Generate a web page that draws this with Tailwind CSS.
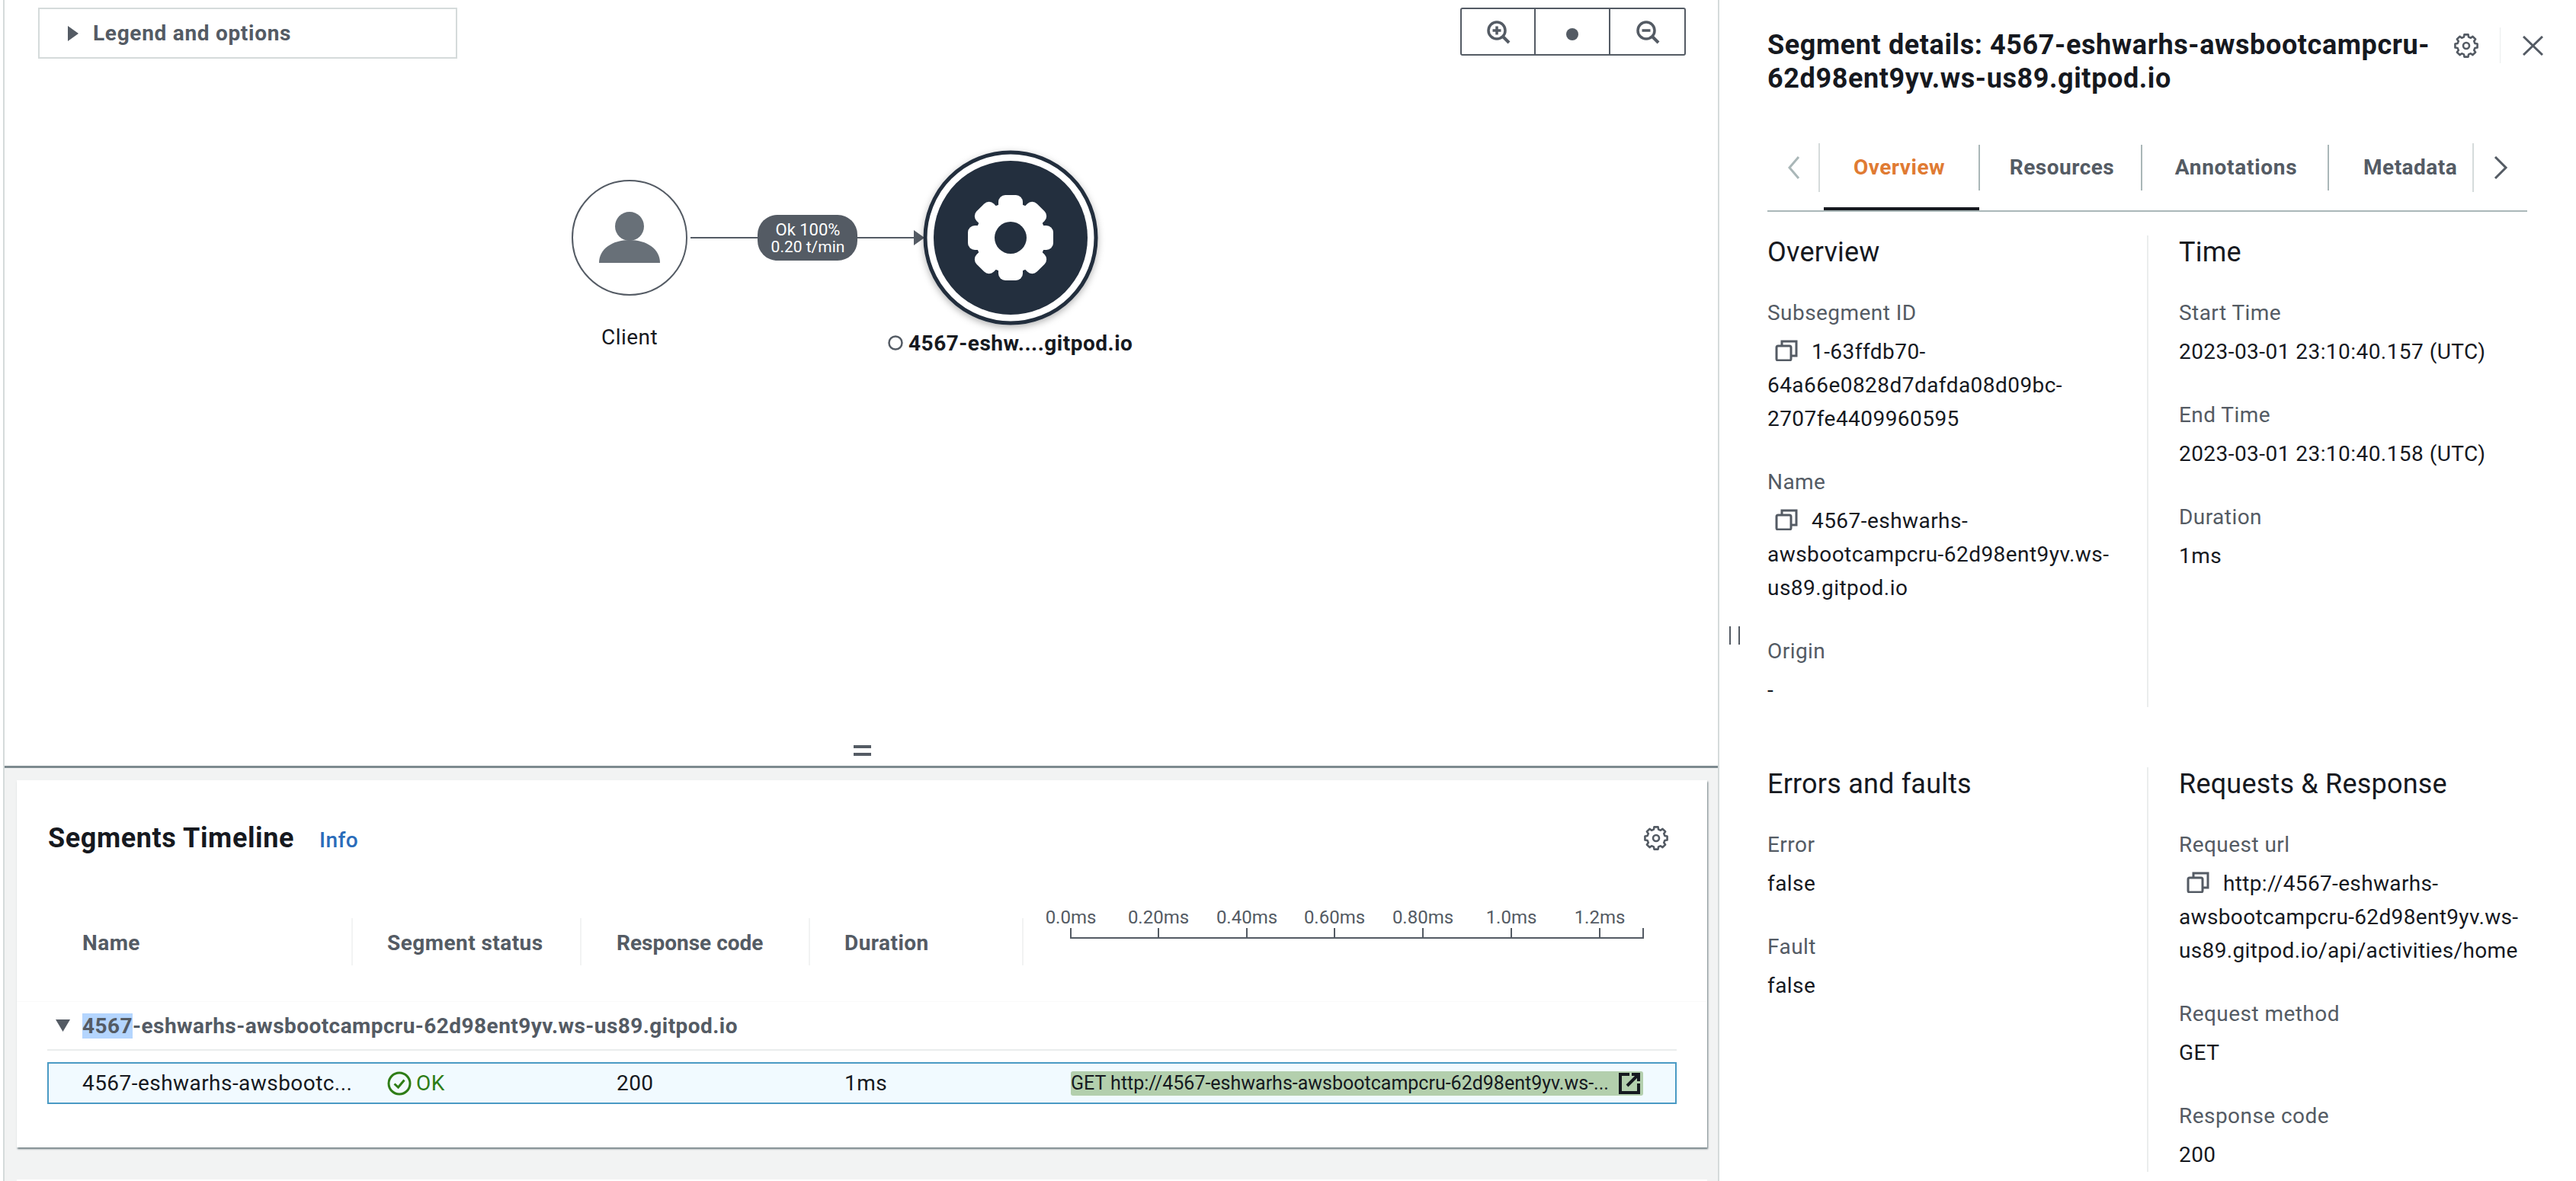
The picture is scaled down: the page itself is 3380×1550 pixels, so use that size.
<!DOCTYPE html>
<html lang="en">
<head>
    <meta charset="UTF-8">
    <title>Segment details</title>
    <script src="https://cdn.jsdelivr.net/npm/@tailwindcss/browser@4"></script>
</head>
<body class="bg-white">
    <div class="flex w-[3380px] h-[1550px] overflow-hidden bg-white font-['Roboto',sans-serif] text-[28px] leading-[44px] tracking-[0.45px] text-[#16191f]">

        <!-- left pane -->
        <div class="ml-[4px] w-[2250px] shrink-0 border-l-2 border-[#d5dbdb] flex flex-col">

            <!-- service map -->
            <div class="relative h-[1008px] shrink-0 border-b-[3px] border-[#7d8a8f]">
                <div class="flex justify-between items-start pt-[10px] pl-[44px] pr-[42px]">
                    <div class="w-[550px] h-[67px] border-2 border-[#d5dbdb] flex items-center pl-[36px] gap-[18px]">
                        <svg width="16" height="22" viewBox="0 0 16 22"><path d="M1 1 L15 11 L1 21 Z" fill="#545b64"/></svg>
                        <span class="font-bold text-[#545b64] tracking-[0.7px]">Legend and options</span>
                    </div>
                    <div class="flex h-[63px] border-2 border-[#545b64] rounded-[3px]">
                        <div class="w-[97px] flex items-center justify-center border-r-2 border-[#545b64]">
                            <svg width="32" height="32" viewBox="0 0 32 32" fill="none" stroke="#545b64"><circle cx="14" cy="14" r="11" stroke-width="3.5"/><path d="M22 22 L30 30" stroke-width="4"/><path d="M8.5 14 H19.5 M14 8.5 V19.5" stroke-width="3.5"/></svg>
                        </div>
                        <div class="w-[98px] flex items-center justify-center border-r-2 border-[#545b64]">
                            <div class="w-[16px] h-[16px] rounded-full bg-[#545b64] mt-[6px]"></div>
                        </div>
                        <div class="w-[97px] flex items-center justify-center">
                            <svg width="32" height="32" viewBox="0 0 32 32" fill="none" stroke="#545b64"><circle cx="14" cy="14" r="11" stroke-width="3.5"/><path d="M22 22 L30 30" stroke-width="4"/><path d="M8.5 14 H19.5" stroke-width="3.5"/></svg>
                        </div>
                    </div>
                </div>

                <!-- graph nodes -->
                <svg class="absolute left-0 top-0" width="2248" height="1000" viewBox="6 0 2248 1000">
                    <defs>
                        <filter id="nodeShadow" x="-20%" y="-20%" width="140%" height="140%"><feDropShadow dx="0" dy="3" stdDeviation="5" flood-color="#000" flood-opacity="0.3"/></filter>
                    </defs>
                    <circle cx="826" cy="312" r="75" fill="#fff" stroke="#545b64" stroke-width="2"/>
                    <ellipse cx="826" cy="297" rx="19" ry="19" fill="#687078"/>
                    <path d="M786 345 C786 327 803 315 826 315 C849 315 866 327 866 345 Z" fill="#687078"/>
                    <path d="M906 312 H1204" stroke="#545b64" stroke-width="2"/>
                    <path d="M1199 302 L1213 312 L1199 322 Z" fill="#545b64"/>
                    <rect x="994" y="282" width="131" height="60" rx="26" fill="#545b64"/>
                    <text x="1060" y="309" text-anchor="middle" font-size="22" fill="#fff" class="tracking-normal">Ok 100%</text>
                    <text x="1060" y="331" text-anchor="middle" font-size="21" fill="#fff" class="tracking-normal">0.20 t/min</text>
                    <circle cx="1326" cy="312" r="112" fill="#fff" stroke="#232f3e" stroke-width="5" filter="url(#nodeShadow)"/>
                    <circle cx="1326" cy="312" r="101" fill="#232f3e"/>
                    <g fill="#fff" transform="translate(1326 312)">
                        <circle r="46"/>
                        <rect x="-16" y="-56" width="32" height="30" rx="9"/>
                        <rect x="-16" y="-56" width="32" height="30" rx="9" transform="rotate(45)"/>
                        <rect x="-16" y="-56" width="32" height="30" rx="9" transform="rotate(90)"/>
                        <rect x="-16" y="-56" width="32" height="30" rx="9" transform="rotate(135)"/>
                        <rect x="-16" y="-56" width="32" height="30" rx="9" transform="rotate(180)"/>
                        <rect x="-16" y="-56" width="32" height="30" rx="9" transform="rotate(225)"/>
                        <rect x="-16" y="-56" width="32" height="30" rx="9" transform="rotate(270)"/>
                        <rect x="-16" y="-56" width="32" height="30" rx="9" transform="rotate(315)"/>
                    </g>
                    <circle cx="1326" cy="312" r="21" fill="#232f3e"/>
                    <text x="826" y="452" text-anchor="middle" font-size="28" fill="#16191f">Client</text>
                    <circle cx="1175" cy="450" r="8.5" fill="#fff" stroke="#545b64" stroke-width="2.5"/>
                    <text x="1192" y="460" font-size="28" font-weight="700" fill="#16191f" class="tracking-[0.5px]">4567-eshw....gitpod.io</text>
                </svg>

                <div class="absolute left-[1114px] top-[978px] w-[23px] h-[14px] border-y-[4px] border-[#545b64]"></div>
            </div>

            <!-- timeline -->
            <div class="flex-1 bg-[#f2f3f3] pl-[16px] pr-[14px] pt-[16px]">
                <div class="h-[482px] pt-[54px] bg-white shadow-[1px_2px_2px_0_rgba(0,28,36,0.55)]">
                    <div class="flex justify-between items-center h-[44px] pl-[41px] pr-[51px]">
                        <div class="flex items-center h-[44px] gap-[33px]">
                            <h2 class="text-[36px] font-bold tracking-[0.6px]">Segments Timeline</h2>
                            <span class="font-medium text-[#2a6cba] pt-[6px] leading-[38px]">Info</span>
                        </div>
                        <svg width="32" height="32" viewBox="0 0 16 16" fill="none" stroke="#545b64" stroke-width="1.3" stroke-linejoin="round"><polygon points="6.715,0.712 9.285,0.712 9.527,2.301 10.95,2.89 12.244,1.938 14.062,3.756 13.11,5.05 13.699,6.473 15.288,6.715 15.288,9.285 13.699,9.527 13.11,10.95 14.062,12.244 12.244,14.062 10.95,13.11 9.527,13.699 9.285,15.288 6.715,15.288 6.473,13.699 5.05,13.11 3.756,14.062 1.938,12.244 2.89,10.95 2.301,9.527 0.712,9.285 0.712,6.715 2.301,6.473 2.89,5.05 1.938,3.756 3.756,1.938 5.05,2.89 6.473,2.301"/><circle cx="8" cy="8" r="2"/></svg>
                    </div>

                    <div class="mt-[68px] px-[40px]">
                        <!-- header row -->
                        <div class="grid grid-cols-[401px_300px_300px_280px_856px] h-[77px] font-bold text-[#545b64]">
                            <div class="self-end h-[62px] pl-[46px] pt-[11px] border-r-2 border-[#f2f3f3]">Name</div>
                            <div class="self-end h-[62px] pl-[45px] pt-[11px] border-r-2 border-[#f2f3f3]">Segment status</div>
                            <div class="self-end h-[62px] pl-[46px] pt-[11px] border-r-2 border-[#f2f3f3] tracking-normal">Response code</div>
                            <div class="self-end h-[62px] pl-[45px] pt-[11px] border-r-2 border-[#f2f3f3]">Duration</div>
                            <svg width="856" height="77" viewBox="1343 1190 856 77" class="font-normal tracking-normal">
                                <g font-size="24" fill="#545b64" text-anchor="middle">
                                    <text x="1405" y="1212">0.0ms</text>
                                    <text x="1520" y="1212">0.20ms</text>
                                    <text x="1636" y="1212">0.40ms</text>
                                    <text x="1751" y="1212">0.60ms</text>
                                    <text x="1867" y="1212">0.80ms</text>
                                    <text x="1983" y="1212">1.0ms</text>
                                    <text x="2099" y="1212">1.2ms</text>
                                </g>
                                <path d="M1405 1218 V1231 H2156 V1218 M1520 1218 V1231 M1636 1218 V1231 M1751 1218 V1231 M1867 1218 V1231 M1983 1218 V1231 M2099 1218 V1231" fill="none" stroke="#545b64" stroke-width="2"/>
                            </svg>
                        </div>

                        <div class="mt-[47px] -mx-[40px] border-t border-[#fafafa]"></div>

                        <!-- group row -->
                        <div class="h-[62px] flex items-center pl-[10px] border-b-2 border-[#eaeded] box-content">
                            <svg width="21" height="16" viewBox="0 0 21 16" class="mr-[15px]"><path d="M1 0 H20 L10.5 16 Z" fill="#545b64"/></svg>
                            <span class="font-bold text-[#545b64] leading-[43px]"><span class="bg-[#b4d5fe]">4567</span>-eshwarhs-awsbootcampcru-62d98ent9yv.ws-us89.gitpod.io</span>
                        </div>

                        <!-- selected row -->
                        <div class="mt-[15px] h-[55px] grid grid-cols-[399px_300px_300px_280px_757px] items-center border-2 border-[#4a9ac4] bg-[#f1faff]">
                            <div class="pl-[44px] whitespace-nowrap">4567-eshwarhs-awsbootc...</div>
                            <div class="pl-[45px] flex items-center gap-[6px] text-[#2e7d16]">
                                <svg width="32" height="32" viewBox="0 0 32 32" fill="none" stroke="#2e7d16" stroke-width="3"><circle cx="16" cy="16" r="14"/><path d="M9.5 16.5 L14.5 21 L22.5 11.5"/></svg>
                                <span>OK</span>
                            </div>
                            <div class="pl-[46px]">200</div>
                            <div class="pl-[45px]">1ms</div>
                            <div class="pl-[62px]">
                                <div class="w-[751px] h-[32px] rounded-[3px] bg-[#b3cfad] flex items-center justify-between pr-[4px] text-[25px] leading-[32px] tracking-normal whitespace-nowrap overflow-hidden">
                                    <span>GET http://4567-eshwarhs-awsbootcampcru-62d98ent9yv.ws-...</span>
                                    <svg width="28" height="28" viewBox="0 0 28 28" fill="none" stroke="#16191f" stroke-width="4" class="shrink-0"><path d="M14 2 H2 V26 H26 V14 M11 17 L25 3 M17 2 H26 V11"/></svg>
                                </div>
                            </div>
                        </div>
                    </div>
                </div>
                <div class="mt-[42px] h-[10px] bg-white"></div>
            </div>
        </div>

        <!-- segment details -->
        <div class="relative w-[1126px] min-w-0 shrink-0 border-l-2 border-[#d5dbdb] pl-[63px] pr-[64px] pt-[37px]">
            <div class="absolute left-[13px] top-[822px] w-[14px] h-[24px] border-x-2 border-[#545b64]"></div>

            <div class="flex items-start">
                <h2 class="w-[901px] shrink-0 text-[36px] font-bold tracking-[0.6px] whitespace-nowrap">Segment details: 4567-eshwarhs-awsbootcampcru-<br>62d98ent9yv.ws-us89.gitpod.io</h2>
                <svg width="32" height="32" viewBox="0 0 16 16" fill="none" stroke="#545b64" stroke-width="1.3" stroke-linejoin="round" class="mt-[7px] shrink-0"><polygon points="6.715,0.712 9.285,0.712 9.527,2.301 10.95,2.89 12.244,1.938 14.062,3.756 13.11,5.05 13.699,6.473 15.288,6.715 15.288,9.285 13.699,9.527 13.11,10.95 14.062,12.244 12.244,14.062 10.95,13.11 9.527,13.699 9.285,15.288 6.715,15.288 6.473,13.699 5.05,13.11 3.756,14.062 1.938,12.244 2.89,10.95 2.301,9.527 0.712,9.285 0.712,6.715 2.301,6.473 2.89,5.05 1.938,3.756 3.756,1.938 5.05,2.89 6.473,2.301"/><circle cx="8" cy="8" r="2"/></svg>
                <div class="ml-[28px] -mt-[1px] h-[47px] shrink-0 border-l border-[#eaeded] pl-[29px] pt-[11px]">
                    <svg width="27" height="26" viewBox="0 0 27 26" stroke="#545b64" stroke-width="3"><path d="M1 1 L26 25 M26 1 L1 25"/></svg>
                </div>
            </div>

            <!-- tabs -->
            <div class="mt-[63px] flex h-[64px] font-bold text-[#545b64] tracking-[0.5px]">
                <div class="w-[69px] shrink-0 flex items-center pl-[26px] border-r-2 border-[#d5dbdb]">
                    <svg width="17" height="30" viewBox="0 0 17 30" fill="none" stroke="#aab7b8" stroke-width="3"><path d="M15 1 L3 15 L15 29"/></svg>
                </div>
                <div class="w-[210px] shrink-0 text-center leading-[60px] text-[#e07b33] border-r-2 border-[#aab7b8] my-[2px]">Overview</div>
                <div class="w-[213px] shrink-0 text-center pl-[4px] leading-[60px] border-r-2 border-[#aab7b8] my-[2px]">Resources</div>
                <div class="w-[245px] shrink-0 text-center pl-[3px] leading-[60px] tracking-[0.7px] border-r-2 border-[#aab7b8] my-[2px]">Annotations</div>
                <div class="w-[190px] shrink-0 pl-[45px] leading-[64px] border-r-2 border-[#d5dbdb] overflow-hidden whitespace-nowrap">Metadata</div>
                <div class="flex items-center pl-[26px]">
                    <svg width="19" height="30" viewBox="0 0 19 30" fill="none" stroke="#545b64" stroke-width="3"><path d="M2 1 L16 15 L2 29"/></svg>
                </div>
            </div>
            <div class="h-[26px] flex flex-col justify-end border-b-2 border-[#aab7b8]">
                <div class="ml-[74px] w-[204px] h-[4px] bg-[#16191f]"></div>
            </div>

            <!-- overview and time -->
            <div class="mt-[31px] grid grid-cols-[500px_1fr] h-[619px]">
                <div class="border-r-2 border-[#eaeded]">
                    <h3 class="text-[36px] tracking-[0.2px] mb-[38px]">Overview</h3>
                    <p class="text-[#545b64] leading-[40px] mb-[9px]">Subsegment ID</p>
                    <p class="mb-[41px] whitespace-nowrap"><svg width="30" height="28" viewBox="0 0 30 28" fill="none" stroke="#545b64" stroke-width="3" class="inline-block ml-[10px] mr-[18px] align-[-3px]"><path d="M9 7 V2 H28 V21 H22"/><rect x="2" y="8" width="19" height="19" rx="2"/></svg>1-63ffdb70-<br>64a66e0828d7dafda08d09bc-<br>2707fe4409960595</p>
                    <p class="text-[#545b64] leading-[40px] mb-[9px]">Name</p>
                    <p class="mb-[41px] whitespace-nowrap"><svg width="30" height="28" viewBox="0 0 30 28" fill="none" stroke="#545b64" stroke-width="3" class="inline-block ml-[10px] mr-[18px] align-[-3px]"><path d="M9 7 V2 H28 V21 H22"/><rect x="2" y="8" width="19" height="19" rx="2"/></svg>4567-eshwarhs-<br>awsbootcampcru-62d98ent9yv.ws-<br>us89.gitpod.io</p>
                    <p class="text-[#545b64] leading-[40px] mb-[9px]">Origin</p>
                    <p>-</p>
                </div>
                <div class="pl-[40px]">
                    <h3 class="text-[36px] tracking-[0.2px] mb-[38px]">Time</h3>
                    <p class="text-[#545b64] leading-[40px] mb-[9px]">Start Time</p>
                    <p class="mb-[41px]">2023-03-01 23:10:40.157 (UTC)</p>
                    <p class="text-[#545b64] leading-[40px] mb-[9px]">End Time</p>
                    <p class="mb-[41px]">2023-03-01 23:10:40.158 (UTC)</p>
                    <p class="text-[#545b64] leading-[40px] mb-[9px]">Duration</p>
                    <p>1ms</p>
                </div>
            </div>

            <!-- errors and requests -->
            <div class="mt-[79px] grid grid-cols-[500px_1fr] h-[530px]">
                <div class="border-r-2 border-[#eaeded]">
                    <h3 class="text-[36px] tracking-[0.2px] mb-[38px]">Errors and faults</h3>
                    <p class="text-[#545b64] leading-[40px] mb-[9px]">Error</p>
                    <p class="mb-[41px]">false</p>
                    <p class="text-[#545b64] leading-[40px] mb-[9px]">Fault</p>
                    <p>false</p>
                </div>
                <div class="pl-[40px]">
                    <h3 class="text-[36px] tracking-[0.2px] mb-[38px]">Requests &amp; Response</h3>
                    <p class="text-[#545b64] leading-[40px] mb-[9px]">Request url</p>
                    <p class="mb-[41px] whitespace-nowrap tracking-[0.35px]"><svg width="30" height="28" viewBox="0 0 30 28" fill="none" stroke="#545b64" stroke-width="3" class="inline-block ml-[10px] mr-[18px] align-[-3px]"><path d="M9 7 V2 H28 V21 H22"/><rect x="2" y="8" width="19" height="19" rx="2"/></svg>http://4567-eshwarhs-<br>awsbootcampcru-62d98ent9yv.ws-<br>us89.gitpod.io/api/activities/home</p>
                    <p class="text-[#545b64] leading-[40px] mb-[9px]">Request method</p>
                    <p class="mb-[41px]">GET</p>
                    <p class="text-[#545b64] leading-[40px] mb-[9px]">Response code</p>
                    <p>200</p>
                </div>
            </div>
        </div>
    </div>
</body>
</html>
